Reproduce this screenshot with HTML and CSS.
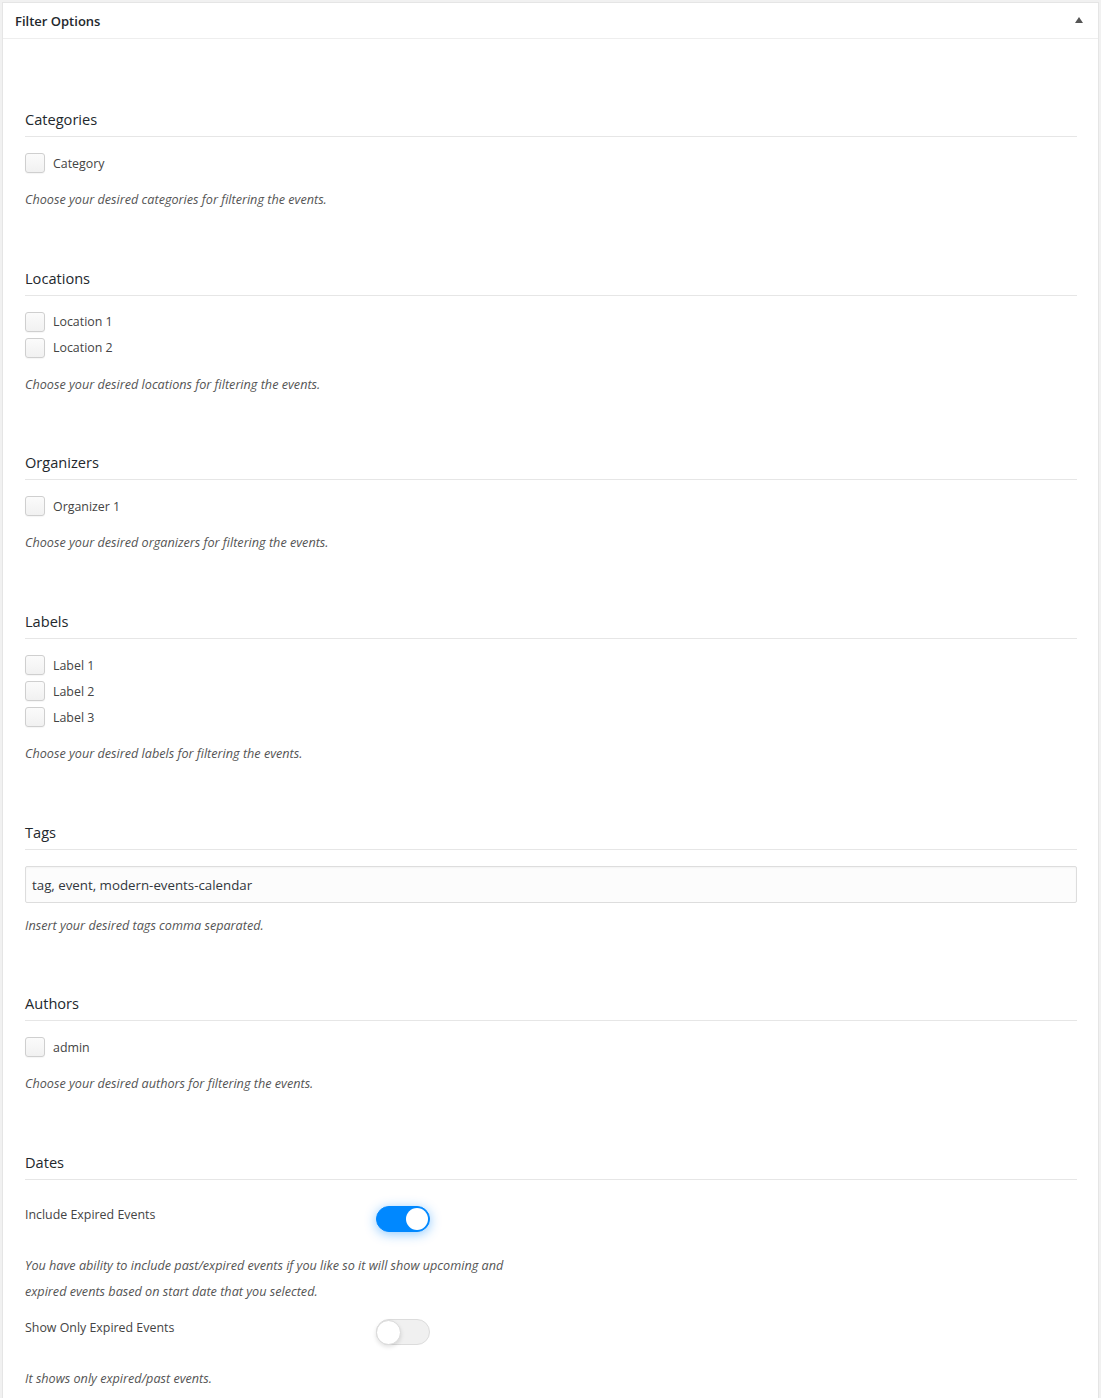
FILE: index.html
```html
<!DOCTYPE html>
<html lang="en">
<head>
<meta charset="utf-8">
<title>Filter Options</title>
<link rel="stylesheet" href="styles.css">
</head>
<body>
<div class="postbox">
  <div class="postbox-header">
    <h2 class="postbox-title">Filter Options</h2>
    <span class="toggle-arrow"></span>
  </div>
  <div class="inside">
    <div class="section">
      <h3 class="sec-title">Categories</h3>
      <div class="checks">
        <label class="check"><span class="box"></span>Category</label>
      </div>
      <p class="desc">Choose your desired categories for filtering the events.</p>
    </div>
    <div class="section">
      <h3 class="sec-title">Locations</h3>
      <div class="checks">
        <label class="check"><span class="box"></span>Location 1</label>
        <label class="check"><span class="box"></span>Location 2</label>
      </div>
      <p class="desc">Choose your desired locations for filtering the events.</p>
    </div>
    <div class="section">
      <h3 class="sec-title">Organizers</h3>
      <div class="checks">
        <label class="check"><span class="box"></span>Organizer 1</label>
      </div>
      <p class="desc">Choose your desired organizers for filtering the events.</p>
    </div>
    <div class="section">
      <h3 class="sec-title">Labels</h3>
      <div class="checks">
        <label class="check"><span class="box"></span>Label 1</label>
        <label class="check"><span class="box"></span>Label 2</label>
        <label class="check"><span class="box"></span>Label 3</label>
      </div>
      <p class="desc">Choose your desired labels for filtering the events.</p>
    </div>
    <div class="section">
      <h3 class="sec-title">Tags</h3>
      <div class="text-input">tag, event, modern-events-calendar</div>
      <p class="desc desc-tags">Insert your desired tags comma separated.</p>
    </div>
    <div class="section">
      <h3 class="sec-title">Authors</h3>
      <div class="checks">
        <label class="check"><span class="box"></span>admin</label>
      </div>
      <p class="desc">Choose your desired authors for filtering the events.</p>
    </div>
    <div class="section section-dates">
      <h3 class="sec-title">Dates</h3>
      <div class="switch-row first">
        <span class="switch-label">Include Expired Events</span>
        <span class="switch on"><span class="knob"></span></span>
      </div>
      <p class="desc desc-wide">You have ability to include past/expired events if you like so it will show upcoming and expired events based on start date that you selected.</p>
      <div class="switch-row">
        <span class="switch-label">Show Only Expired Events</span>
        <span class="switch"><span class="knob"></span></span>
      </div>
      <p class="desc desc-wide">It shows only expired/past events.</p>
    </div>
  </div>
</div>
</body>
</html>
```

FILE: styles.css
```css
html, body {
  margin: 0;
  padding: 0;
}
body {
  background: #f1f1f1;
  font-family: "Open Sans", "Noto Sans", sans-serif;
  color: #444;
  padding-top: 2px;
}
.postbox {
  margin: 0 2px 0 2px;
  background: #fff;
  border: 1px solid #e5e5e5;
  border-bottom: none;
  min-height: 1396px;
  box-sizing: border-box;
}
.postbox-header {
  height: 35px;
  border-bottom: 1px solid #eee;
  display: flex;
  align-items: center;
  justify-content: space-between;
  padding: 0 15px 0 12px;
}
.postbox-title {
  margin: 0;
  font-size: 13px;
  font-weight: 600;
  color: #23282d;
  line-height: 20px;
}
.toggle-arrow {
  width: 0;
  height: 0;
  border-left: 4px solid transparent;
  border-right: 4px solid transparent;
  border-bottom: 6px solid #555;
  margin-top: -2px;
}
.inside {
  padding: 70px 21px 0 22px;
}
.section {
  margin-bottom: 55.7px;
}
.sec-title {
  margin: 0;
  font-size: 14.6px;
  font-weight: 500;
  color: #23282d;
  line-height: 20px;
  padding-bottom: 7px;
  border-bottom: 1px solid #e6e6e6;
}
.checks {
  display: flex;
  flex-direction: column;
  gap: 6px;
  margin-top: 16px;
  margin-bottom: 13px;
}
.check {
  display: flex;
  align-items: center;
  height: 20px;
  font-size: 12.4px;
  color: #444;
}
.box {
  width: 18px;
  height: 18px;
  border: 1px solid #cfcfcf;
  border-radius: 3px;
  background: linear-gradient(#fbfbfb, #f1f1f1);
  box-shadow: 0 1px 1px rgba(0, 0, 0, 0.04);
  margin-right: 8px;
  flex: none;
}
.desc {
  margin: 0;
  font-size: 12.65px;
  font-style: italic;
  color: #555;
  line-height: 26px;
}
.text-input {
  margin-top: 16px;
  height: 35px;
  border: 1px solid #ddd;
  border-radius: 2px;
  background: #fcfcfc;
  box-shadow: inset 0 1px 2px rgba(0, 0, 0, 0.04);
  font-size: 13.3px;
  color: #32373c;
  line-height: 36px;
  padding: 0 6px;
}
.desc-tags {
  margin-top: 9px;
}
.switch-row {
  display: flex;
  align-items: center;
  height: 26px;
  margin-top: 15px;
  margin-bottom: 20px;
}
.switch-row.first {
  margin-top: 26px;
}
.switch-label {
  width: 351px;
  font-size: 12.4px;
  line-height: 18px;
  align-self: flex-start;
  color: #444;
}
.switch {
  position: relative;
  width: 52px;
  height: 24px;
  border-radius: 13px;
  background: #f0f0f0;
  border: 1px solid #dcdcdc;
  display: flex;
  align-items: center;
  justify-content: flex-start;
}
.switch .knob {
  width: 25px;
  height: 25px;
  border-radius: 50%;
  background: #fff;
  border: 1px solid #dadada;
  box-sizing: border-box;
  margin-left: -1px;
  box-shadow: 0 2px 4px rgba(0, 0, 0, 0.12);
}
.switch.on {
  background: #0088ff;
  border-color: #0088ff;
  justify-content: flex-end;
  box-shadow: 0 2px 12px rgba(0, 136, 255, 0.45);
}
.switch.on .knob {
  width: 22px;
  height: 22px;
  border: none;
  margin: 0 1px 0 0;
  box-shadow: none;
}
.desc-wide {
  max-width: 500px;
}
.section-dates {
  margin-bottom: 0;
}
```
